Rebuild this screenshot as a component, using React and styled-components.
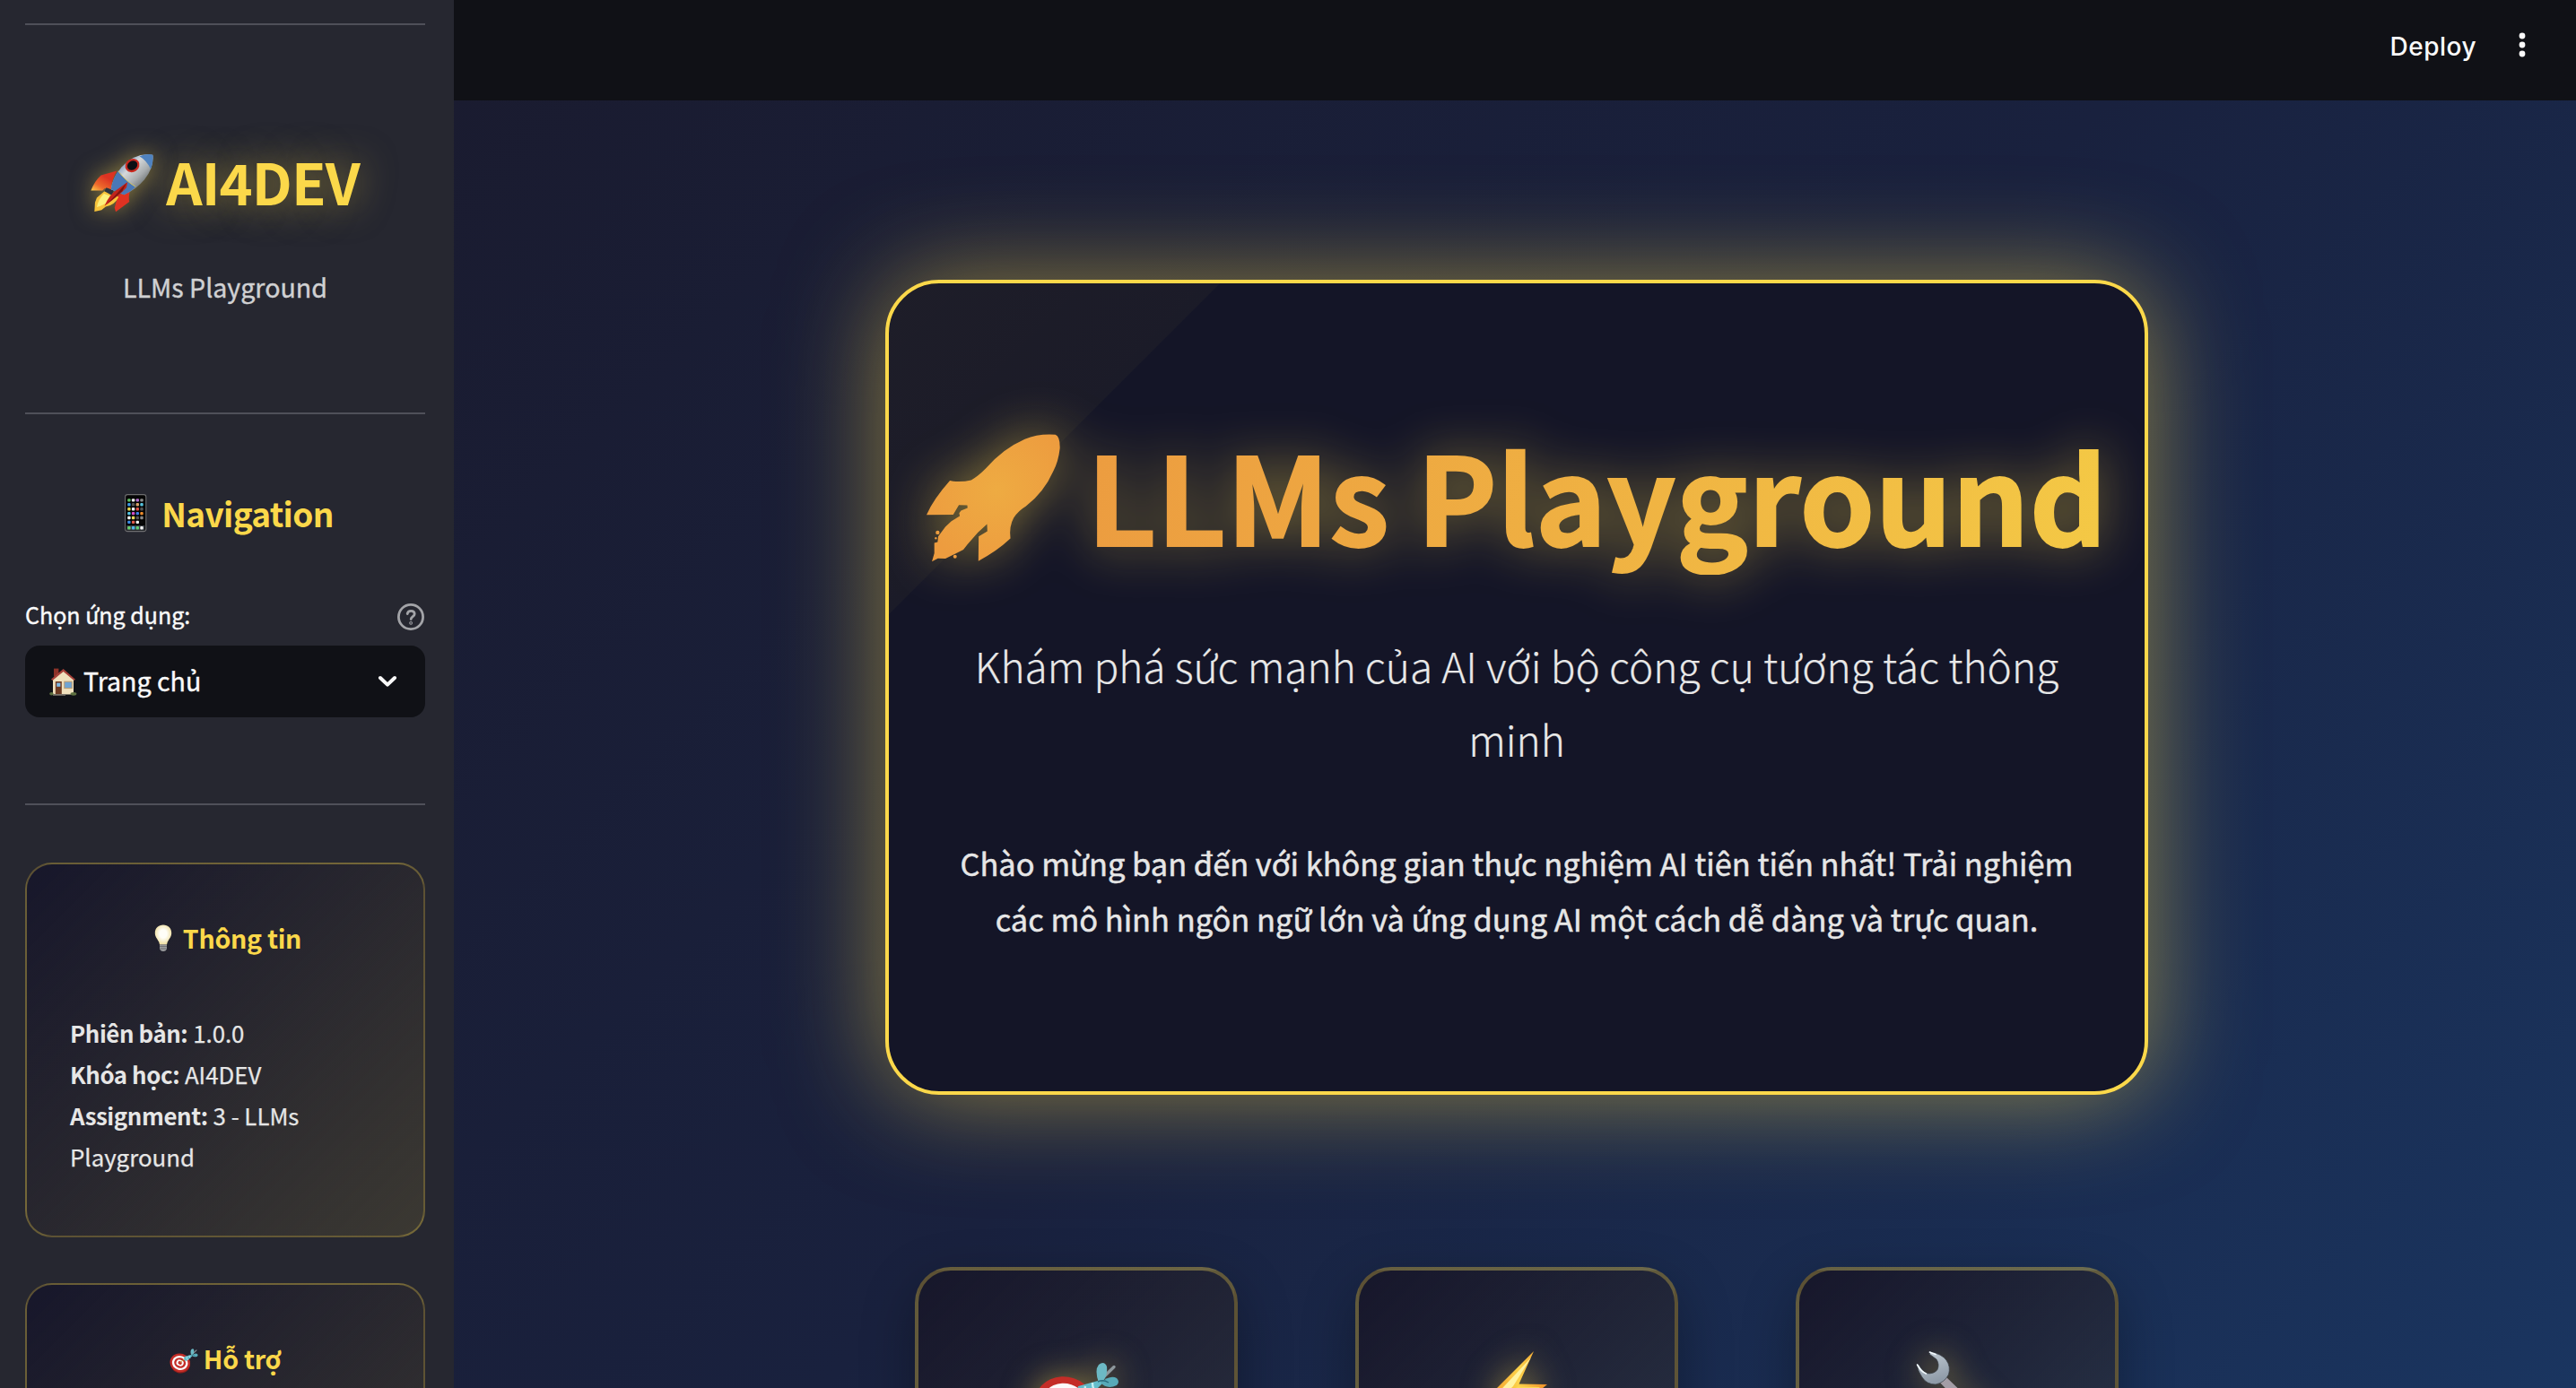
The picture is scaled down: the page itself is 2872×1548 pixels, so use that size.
import React from "react";
import styled, { createGlobalStyle } from "styled-components";

const yellow = "#fbd84a";
const sans = `"Noto Sans CJK JP", "Noto Sans", sans-serif`;

const Global = createGlobalStyle`
  *, *::before { box-sizing: border-box; }
  html, body { height: 100%; }
  body { margin: 0; background: #101116; overflow: hidden; font-family: ${sans}; }
  svg { display: block; flex: none; overflow: visible; }
`;

const Shell = styled.div`
  display: flex;
  width: 100vw;
  height: 100vh;
  overflow: hidden;
`;

/* ---------- sidebar ---------- */
const Sidebar = styled.aside`
  flex: none;
  width: 506px;
  padding: 26px 32px 0 28px;
  background: #262730;
  overflow: hidden;
`;
const Rule = styled.hr`
  margin: 0;
  border: 0;
  height: 2px;
  background: #4f5059;
`;
const Brand = styled.div`
  height: 432px;
  padding-top: 132px;
  display: flex;
  flex-direction: column;
  align-items: center;
`;
const BrandTitle = styled.h1`
  margin: 0;
  display: flex;
  align-items: center;
  gap: 14px;
  font-size: 63px;
  line-height: 84px;
  font-weight: 700;
  letter-spacing: -0.9px;
  color: ${yellow};
  text-shadow: 0 0 40px rgba(251, 216, 74, 0.5);
  svg {
    margin-top: 4px;
    filter: drop-shadow(0 0 13px rgba(251, 216, 74, 0.5));
  }
`;
const BrandSub = styled.p`
  margin: 52px 0 0;
  font-size: 28.6px;
  line-height: 48px;
  color: #d0d0d2;
  -webkit-text-stroke: 0.4px #d0d0d2;
`;
const NavBlock = styled.div`
  height: 434px;
  padding-top: 85px;
`;
const NavTitle = styled.h3`
  margin: 0;
  display: flex;
  align-items: center;
  justify-content: center;
  gap: 8px;
  font-size: 37px;
  line-height: 50px;
  font-weight: 700;
  letter-spacing: -0.7px;
  color: ${yellow};
`;
const LabelRow = styled.div`
  margin-top: 68px;
  height: 40px;
  display: flex;
  align-items: center;
  justify-content: space-between;
  font-size: 25px;
  line-height: 40px;
  color: #fafafa;
  -webkit-text-stroke: 0.4px #fafafa;
  svg { margin: 6px 1px 0 0; }
`;
const Select = styled.div`
  margin-top: 15px;
  height: 80px;
  padding: 0 32px 0 27px;
  display: flex;
  align-items: center;
  border-radius: 16px;
  background: #101116;
  font-size: 28.6px;
  line-height: 40px;
  color: #fafafa;
  -webkit-text-stroke: 0.4px #fafafa;
`;
const SelectText = styled.span`
  flex: 1;
  margin: -2px 0 0 7px;
`;
const InfoCard = styled.section`
  margin-top: ${(p) => p.$gap}px;
  height: 418px;
  padding: 60px 48px 0;
  border: 2px solid rgba(251, 216, 74, 0.3);
  border-radius: 30px;
  background: linear-gradient(135deg, #17172b, rgba(251, 216, 74, 0.1));
`;
const InfoTitle = styled.h4`
  margin: 0;
  display: flex;
  align-items: center;
  justify-content: center;
  gap: 6px;
  font-size: 28.6px;
  line-height: 44px;
  font-weight: 700;
  letter-spacing: -0.3px;
  color: ${yellow};
`;
const InfoText = styled.p`
  margin: 61px 0 0;
  font-size: 25.8px;
  line-height: 46px;
  color: #e6e6e6;
  -webkit-text-stroke: 0.25px #e6e6e6;
  b { letter-spacing: -0.4px; -webkit-text-stroke: 0; }
`;

/* ---------- main ---------- */
const Main = styled.main`
  flex: 1;
  min-width: 0;
  display: flex;
  flex-direction: column;
  background: linear-gradient(135deg, #1a1b2f 0%, #19213e 50%, #1a3560 100%);
`;
const Header = styled.header`
  flex: none;
  height: 112px;
  padding: 0 56px 12px 0;
  display: flex;
  align-items: center;
  justify-content: flex-end;
  gap: 47px;
  background: #101116;
  font-family: Inter, "Noto Sans", sans-serif;
  font-size: 28px;
  font-weight: 500;
  letter-spacing: 0.5px;
  color: #fafafa;
  span { padding-top: 3px; }
`;
const Content = styled.div`
  flex: 1;
  min-height: 0;
  padding: 200px 0 0 4px;
  display: flex;
  flex-direction: column;
  align-items: center;
  overflow: hidden;
`;
const Hero = styled.section`
  flex: none;
  width: 1408px;
  height: 909px;
  padding-top: 145px;
  border: 4px solid ${yellow};
  border-radius: 60px;
  background:
    linear-gradient(135deg, rgba(251, 216, 74, 0.043) 0, rgba(251, 216, 74, 0.03) 260.5px, transparent 261.5px) padding-box,
    #141527;
  box-shadow: 0 0 116px rgba(251, 216, 74, 0.52);
  text-align: center;
`;
const HeroTitle = styled.h1`
  margin: 0;
  display: flex;
  align-items: center;
  justify-content: center;
  gap: 30px;
  font-size: 134.7px;
  line-height: 180px;
  font-weight: 700;
  white-space: nowrap;
  filter: drop-shadow(0 0 29px rgba(251, 216, 74, 0.48));
  svg { margin-top: 8px; }
`;
const GradientText = styled.span`
  color: transparent;
  -webkit-text-stroke: 1.8px transparent;
  background: linear-gradient(100deg, #ec9c40 0%, #efaf42 45%, #f4c945 100%);
  -webkit-background-clip: text;
  background-clip: text;
`;
const HeroSub = styled.p`
  margin: 60px 0 0;
  font-size: 46px;
  line-height: 82.2px;
  font-weight: 300;
  color: #e8e8e8;
  -webkit-text-stroke: 0.2px #e8e8e8;
`;
const HeroText = styled.p`
  margin: 66px 0 0;
  font-size: 34.4px;
  line-height: 62px;
  color: #e6e6e6;
  -webkit-text-stroke: 0.5px #e6e6e6;
`;
const Features = styled.div`
  flex: none;
  margin-top: 192px;
  display: grid;
  grid-template-columns: repeat(3, 360px);
  column-gap: 131px;
`;
const Feature = styled.article`
  height: 560px;
  padding-top: 87px;
  display: flex;
  justify-content: center;
  border: 4px solid rgba(251, 216, 74, 0.3);
  border-radius: 40px;
  background: linear-gradient(135deg, #17172b, rgba(251, 216, 74, 0.1));
  box-shadow: 0 20px 60px rgba(0, 0, 0, 0.3);
  svg { filter: drop-shadow(0 0 18px rgba(251, 216, 74, 0.5)); }
`;

/* ---------- drawings ---------- */
const RocketColor = () => (
  <svg width="70" height="66" viewBox="305 512 212 200">
    <defs>
      <linearGradient id="hull" x1="0" y1="0" x2="1" y2="1">
        <stop offset="0.15" stopColor="#4c79b4" />
        <stop offset="0.4" stopColor="#d5d8da" />
        <stop offset="0.6" stopColor="#a9adaf" />
        <stop offset="0.85" stopColor="#4d5456" />
      </linearGradient>
      <linearGradient id="fin" x1="0.8" y1="0" x2="0" y2="1">
        <stop offset="0.3" stopColor="#dc3322" />
        <stop offset="0.7" stopColor="#ee6a2c" />
        <stop offset="1" stopColor="#fbd04c" />
      </linearGradient>
    </defs>
    <path d="M340 586 L394 571 Q376 600 374 634 L353 630 L345 638 L306 638 Q318 606 340 586Z" fill="url(#fin)" />
    <path d="M398 652 L438 640 Q432 662 436 676 L390 710 L386 696Z" fill="#e03222" />
    <path d="M352 640 L384 652 L400 660 Q384 690 356 692 L342 704 L318 709 L320 678 L326 662Z" fill="#f8c43a" />
    <path d="M350 648 L376 658 Q364 680 338 690 L326 694 Q330 668 350 648Z" fill="#fdf07c" />
    <path d="M358 628 L384 638 L376 654 L352 640Z" fill="#2b343f" />
    <path d="M515 517 Q520 560 487 601 Q460 634 418 652 L374 634 Q380 592 410 558 Q456 508 515 517Z" fill="url(#hull)" />
    <path d="M470 522 Q496 512 515 517 Q518 542 508 565 Q494 536 470 522Z" fill="#4f82bf" />
    <path d="M398 572 Q424 606 457 625 Q440 643 418 652 L374 634 Q378 600 398 572Z" fill="#4a78b6" />
    <path d="M398 572 Q424 606 457 625" fill="none" stroke="#d8c35a" strokeWidth="3" />
    <ellipse cx="446" cy="553" rx="25" ry="22" transform="rotate(-35 446 553)" fill="#c92a20" />
    <ellipse cx="446" cy="553" rx="18" ry="15" transform="rotate(-35 446 553)" fill="#0d1014" />
    <path d="M430 609 L426 628 Q400 656 352 690 Q366 654 392 636Z" fill="#c3241c" />
    <path d="M426 612 L392 650 L360 684 Q384 664 412 640Z" fill="#7d1512" />
  </svg>
);

const RocketShape = () => (
  <svg width="149" height="142" viewBox="97 102 446 425">
    <defs>
      <radialGradient id="rocketFill" gradientUnits="userSpaceOnUse" cx="330" cy="290" r="260">
        <stop offset="0" stopColor="#eeab42" />
        <stop offset="1" stopColor="#ed9c3f" />
      </radialGradient>
    </defs>
    <g fill="url(#rocketFill)">
      <path d="M175 258 L186 260 Q218 263 246 256 Q270 243 296 216 Q350 152 425 119 Q470 100 527 104 Q543 110 542 150 Q537 195 520 226 Q490 295 428 344 Q404 358 388 382 Q372 410 377 451 Q330 495 270 526 L271 444 L300 427 L299 403 L268 431 L234 470 L220 488 L192 502 L160 518 L135 517 L115 528 L123 500 L123 466 L134 463 L136 444 L160 412 L180 393 L208 376 L206 366 L212 358 L234 349 L233 340 L205 339 L186 371 L97 372 Q120 320 175 258Z" />
      <circle cx="134" cy="431" r="6.5" />
      <circle cx="128" cy="450" r="3.5" />
      <circle cx="192" cy="511" r="6" />
    </g>
  </svg>
);

const Phone = () => {
  const colors = [
    "#62c466", "#f2f2f2", "#b56fd0", "#8c8c8c",
    "#3d9be9", "#555", "#d9a46a", "#55c2dd",
    "#e9d84f", "#f4f4f4", "#de5145", "#555",
    "#55c8e8", "#d04fc5", "#3d7fe9", "#ee8c2b",
    "#f4f4f4", "#e8d95a", "#555", "#888",
    "#3d8ee9", "#e05a4a", "#f4f4f4", "#0a0a0a",
  ];
  return (
    <svg width="42" height="42" viewBox="0 0 42 42">
      <rect x="9.6" y="0.6" width="23.2" height="41" rx="2.6" fill="#050505" stroke="#6d6d6f" strokeWidth="1.1" />
      {colors.map((c, i) => (
        <rect key={i} x={12.2 + (i % 4) * 4.7} y={5.2 + Math.floor(i / 4) * 4.9} width="3.4" height="3.4" rx="1" fill={c} />
      ))}
      <rect x="11.2" y="35" width="20" height="5.6" fill="#3a3f45" />
      {["#6ad46e", "#4fb8ea", "#5fce70", "#f4f4f4"].map((c, i) => (
        <rect key={c} x={12.2 + i * 4.7} y="36" width="3.4" height="3.4" rx="1" fill={c} />
      ))}
    </svg>
  );
};

const Help = () => (
  <svg width="30" height="30" viewBox="0 0 30 30" fill="none" stroke="#a3a4a8" strokeWidth="2.8" strokeLinecap="round">
    <circle cx="15" cy="15" r="13.6" />
    <path d="M11.2 11.6 C11.6 9.3 13.1 8.3 15.2 8.3 C17.5 8.3 19.2 9.6 19.2 11.7 C19.2 14.6 15.2 14.6 15.2 17.6" />
    <circle cx="15.1" cy="21.8" r="0.5" />
  </svg>
);

const House = () => (
  <svg width="31" height="31" viewBox="0 0 31 31">
    <rect x="5" y="0.6" width="5.4" height="9" fill="#8d3228" />
    <path d="M4 13 L16 3 L27 13 V29.6 H4Z" fill="#f0e0bd" />
    <path d="M2 12.6 L15.6 1 L29 12.8 L27.6 14 L15.6 4 L3.4 14Z" fill="#a8423a" />
    <rect x="6.8" y="15" width="7" height="14.6" fill="#6d3a22" />
    <rect x="8.2" y="16.6" width="4.2" height="4.2" fill="#7db9e6" />
    <rect x="16.8" y="15.2" width="8.4" height="7.4" fill="#6fa4d4" stroke="#b9976b" strokeWidth="1" />
    <rect x="4" y="29" width="14" height="1.8" fill="#7a746b" />
    <ellipse cx="2.4" cy="28.8" rx="2.2" ry="1.8" fill="#5d7040" />
    <ellipse cx="27" cy="28.8" rx="3.4" ry="1.9" fill="#5d7040" />
  </svg>
);

const Chevron = () => (
  <svg width="20" height="12" viewBox="0 0 20 12" fill="none" stroke="#fafafa" strokeWidth="4" strokeLinecap="round" strokeLinejoin="round">
    <path d="M2 2 L10 9.6 L18 2" />
  </svg>
);

const Bulb = () => (
  <svg width="32" height="32" viewBox="0 0 32 32">
    <defs>
      <radialGradient id="bulbGlass" cx="0.5" cy="0.45" r="0.6">
        <stop offset="0.35" stopColor="#fffef8" />
        <stop offset="1" stopColor="#ecd890" />
      </radialGradient>
    </defs>
    <path d="M16 1.6 C10.6 1.6 6.8 5.4 6.8 10.4 C6.8 14.6 9.6 17.4 11.2 20.4 L12 23.6 H20 L20.8 20.4 C22.4 17.4 25.2 14.6 25.2 10.4 C25.2 5.4 21.4 1.6 16 1.6Z" fill="url(#bulbGlass)" />
    <path d="M12 23.6 H20 V28.4 Q18.6 31 16 31 Q13.4 31 12 28.4Z" fill="#9b9c9e" />
    <path d="M12 25.4 H20 M12 28 H20" stroke="#5f6062" strokeWidth="0.8" />
  </svg>
);

const Target = ({ size }) => (
  <svg width={size} height={size} viewBox="0 0 96 96">
    <g transform="rotate(18 35 63)">
      <ellipse cx="37" cy="66" rx="33" ry="31" fill="#8f1f1c" />
      <ellipse cx="35" cy="62.5" rx="34" ry="31" fill="#c42d27" />
      <ellipse cx="35" cy="63" rx="26.5" ry="24" fill="#fbfbfb" />
      <ellipse cx="35" cy="63" rx="19.5" ry="17" fill="#c42d27" />
      <ellipse cx="35" cy="63" rx="12.5" ry="10.5" fill="#fbfbfb" />
      <ellipse cx="35" cy="63" rx="6.5" ry="5.5" fill="#c42d27" />
    </g>
    <path d="M35 62 L58 44" stroke="#c9a13c" strokeWidth="3" />
    <path d="M74 36 L90 20.5" stroke="#8d979c" strokeWidth="3.4" strokeLinecap="round" />
    <path d="M72 36 L50 42 Q46 52 54 57 Q64 54 70 46 L78 38Z" fill="#63bccb" />
    <path d="M58 42 Q56 50 62 54 M66 38 Q66 46 70 47" stroke="#c2f0f4" strokeWidth="2.4" fill="none" />
    <path d="M73 38 Q68 24 73 18 Q79 13 82 20 Q83 30 78 36Z" fill="#6cb9c4" />
    <path d="M75 38 Q86 29 93 33 Q97 37 93 41 Q82 46 75 38Z" fill="#58aab8" />
    <path d="M72 37 Q78 34 84 38" stroke="#2b6e80" strokeWidth="1.5" fill="none" />
  </svg>
);

const Bolt = () => (
  <svg width="96" height="96" viewBox="0 0 96 96">
    <defs>
      <linearGradient id="boltFill" x1="0" y1="0" x2="1" y2="0">
        <stop offset="0" stopColor="#f39a2a" />
        <stop offset="0.5" stopColor="#fcd24a" />
        <stop offset="1" stopColor="#f08f28" />
      </linearGradient>
    </defs>
    <path d="M67 3 L50.5 39.5 L82 40 L18 93 L38 52 L18 52Z" fill="url(#boltFill)" />
    <path d="M64 10 L44 42 L38 48 L28 48.6Z" fill="#fff3a0" />
    <path d="M50 42.5 L74 43 L30 80 L46 49 L38 48Z" fill="#fdd955" />
  </svg>
);

const Wrench = () => (
  <svg width="96" height="96" viewBox="0 0 96 96">
    <defs>
      <linearGradient id="steel" x1="0" y1="0" x2="0.3" y2="1">
        <stop offset="0" stopColor="#c3ccd4" />
        <stop offset="1" stopColor="#8f9ba8" />
      </linearGradient>
    </defs>
    <path d="M35 31 L88 82 Q92 90 85 92 Q80 92 77 88 L28 37Z" fill="#a39da6" />
    <path d="M17.4 3.6 Q31 6 36 13 Q41 20 38.5 29 Q34 38 24 40 Q14 40 9 32 Q4 25 3.3 17.6 L5.4 18.4 Q9 25 13.5 27.6 Q22 29 26 23.6 Q28.6 17.6 25 12 L17.6 6.4Z" fill="url(#steel)" stroke="#3a4048" strokeWidth="0.7" />
    <path d="M3.6 18 Q8 26 13.5 28 M17.4 4 L24 6.4" stroke="#f4fbff" strokeWidth="1.6" fill="none" strokeLinecap="round" />
  </svg>
);

const Dots = () => (
  <svg width="8" height="28" viewBox="0 0 8 28" fill="#fafafa">
    <circle cx="4" cy="4" r="3.4" />
    <circle cx="4" cy="14" r="3.4" />
    <circle cx="4" cy="24" r="3.4" />
  </svg>
);

export default function App() {
  return (
    <Shell>
      <Global />
      <Sidebar>
        <Rule />
        <Brand>
          <BrandTitle><RocketColor /><span>AI4DEV</span></BrandTitle>
          <BrandSub>LLMs Playground</BrandSub>
        </Brand>
        <Rule />
        <NavBlock>
          <NavTitle><Phone /><span>Navigation</span></NavTitle>
          <LabelRow><span>Chọn ứng dụng:</span><Help /></LabelRow>
          <Select><House /><SelectText>Trang chủ</SelectText><Chevron /></Select>
        </NavBlock>
        <Rule />
        <InfoCard $gap={64}>
          <InfoTitle><Bulb /><span>Thông tin</span></InfoTitle>
          <InfoText>
            <b>Phiên bản:</b> 1.0.0<br />
            <b>Khóa học:</b> AI4DEV<br />
            <b>Assignment:</b> 3 - LLMs Playground
          </InfoText>
        </InfoCard>
        <InfoCard $gap={51}>
          <InfoTitle><Target size={32} /><span>Hỗ trợ</span></InfoTitle>
        </InfoCard>
      </Sidebar>
      <Main>
        <Header><span>Deploy</span><Dots /></Header>
        <Content>
          <Hero>
            <HeroTitle><RocketShape /><GradientText>LLMs Playground</GradientText></HeroTitle>
            <HeroSub>Khám phá sức mạnh của AI với bộ công cụ tương tác thông<br />minh</HeroSub>
            <HeroText>
              Chào mừng bạn đến với không gian thực nghiệm AI tiên tiến nhất! Trải nghiệm<br />
              các mô hình ngôn ngữ lớn và ứng dụng AI một cách dễ dàng và trực quan.
            </HeroText>
          </Hero>
          <Features>
            <Feature><Target size={96} /></Feature>
            <Feature><Bolt /></Feature>
            <Feature><Wrench /></Feature>
          </Features>
        </Content>
      </Main>
    </Shell>
  );
}
